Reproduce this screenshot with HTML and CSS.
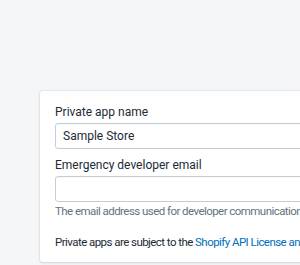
FILE: index.html
```html
<!DOCTYPE html>
<html lang="en">
<head>
  <meta charset="UTF-8">
  <title>Private app</title>
  <link rel="stylesheet" href="styles.css">
</head>
<body>
  <div class="page">
    <div class="card">
      <div class="field">
        <label class="label">Private app name</label>
        <input class="input" type="text" value="Sample Store">
      </div>
      <div class="field">
        <label class="label">Emergency developer email</label>
        <input class="input" type="text" value="">
        <div class="help">The email address used for developer communication regarding this app</div>
      </div>
      <p class="terms">Private apps are subject to the <a href="#">Shopify API License and Terms of Use</a></p>
    </div>
  </div>
</body>
</html>
```

FILE: styles.css
```css
* { box-sizing: border-box; }
html, body {
  margin: 0;
  padding: 0;
  background: #f4f6f8;
  font-family: Roboto, "Liberation Sans", sans-serif;
  color: #212b36;
  overflow: hidden;
  width: 100%;
  height: 100%;
}

.page {
  padding: 91px 0 0 40px;
}

.card {
  width: 420px;
  background: #fff;
  border-radius: 3px;
  box-shadow: 0 0 0 1px rgba(63, 63, 68, 0.05), 0 1px 3px 0 rgba(63, 63, 68, 0.15);
  padding: 13px 15px 12px;
}

.field {
  display: flex;
  flex-direction: column;
  margin-bottom: 8px;
}

.label {
  font-size: 12px;
  line-height: 16px;
  margin-bottom: 3px;
}

.input {
  height: 26px;
  border: 1px solid #c4cdd5;
  border-radius: 3px;
  padding: 0 7px;
  font: inherit;
  font-size: 12px;
  color: #212b36;
  box-shadow: inset 0 1px 0 0 rgba(99, 115, 129, 0.05);
}

.help {
  font-size: 11.5px;
  letter-spacing: -0.55px;
  line-height: 14px;
  color: #637381;
  margin-top: 2px;
  white-space: nowrap;
}

.terms {
  margin: 16px 0 0;
  font-size: 11.5px;
  letter-spacing: -0.55px;
  line-height: 16px;
  white-space: nowrap;
}

.terms a {
  color: #006fbb;
  text-decoration: none;
}
```
